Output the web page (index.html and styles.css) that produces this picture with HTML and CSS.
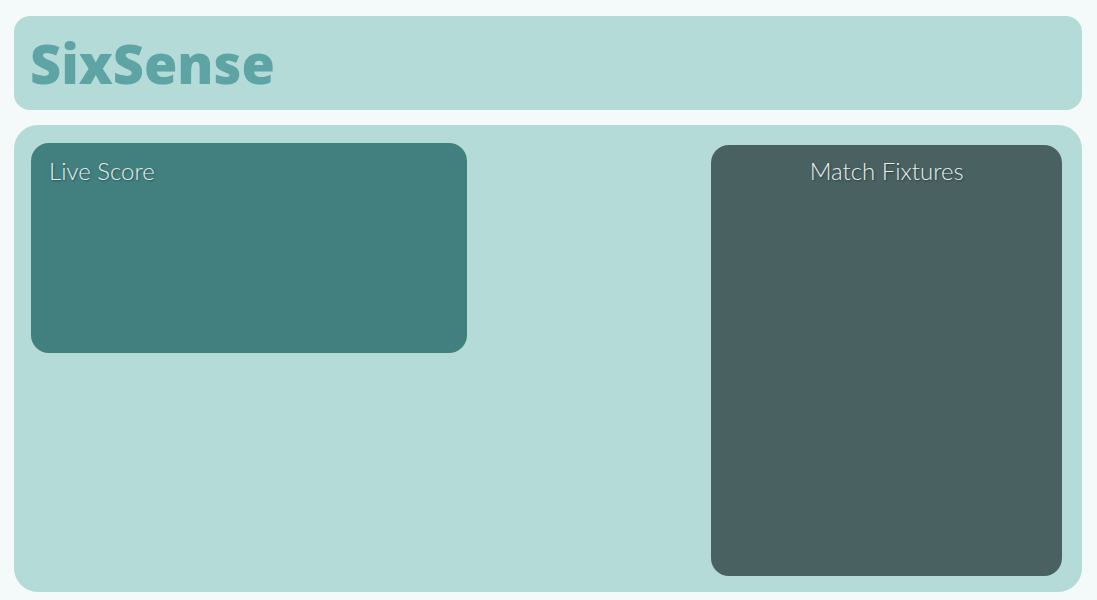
FILE: index.html
```html
<!DOCTYPE html>
<html lang="en">
<head>
<meta charset="utf-8">
<meta name="viewport" content="width=device-width, initial-scale=1">
<title>SixSense</title>
<link rel="stylesheet" href="styles.css">
</head>
<body>
<header class="banner">
<h1 class="brand">SixSense</h1>
</header>
<main class="board">
<section class="card live">
<h2 class="card-title">Live Score</h2>
</section>
<section class="card fixtures">
<h2 class="card-title">Match Fixtures</h2>
</section>
</main>
</body>
</html>
```

FILE: styles.css
```css
* {
  box-sizing: border-box;
}

body {
  margin: 0;
  min-height: 100vh;
  padding: 16px 15px 8px 14px;
  display: flex;
  flex-direction: column;
  gap: 15px;
  background: #f4faf9;
  font-family: Lato, sans-serif;
}

.banner {
  padding: 15px 16px;
  border-radius: 16px;
  background: #b4dbd8;
}

.brand {
  margin: 0;
  font-family: "Open Sans", sans-serif;
  font-size: 54px;
  font-weight: 800;
  line-height: 64px;
  color: #5ea4a4;
}

.board {
  flex: 1;
  display: flex;
  justify-content: space-between;
  align-items: flex-start;
  padding: 18px 20px 16px 17px;
  border-radius: 24px;
  background: #b4dbd8;
}

.card {
  padding: 12px 18px;
  border-radius: 18px;
  color: #e4eeed;
}

.card-title {
  margin: 0;
  font-size: 24px;
  font-weight: 300;
  line-height: 32px;
  text-shadow: 1px 1px 2px rgba(0, 0, 0, 0.4);
}

.live {
  width: 42.3%;
  min-height: 210px;
  background: #428080;
}

.fixtures {
  width: 34%;
  align-self: stretch;
  margin-top: 2px;
  padding-top: 10px;
  background: #4a6161;
  text-align: center;
}
```
